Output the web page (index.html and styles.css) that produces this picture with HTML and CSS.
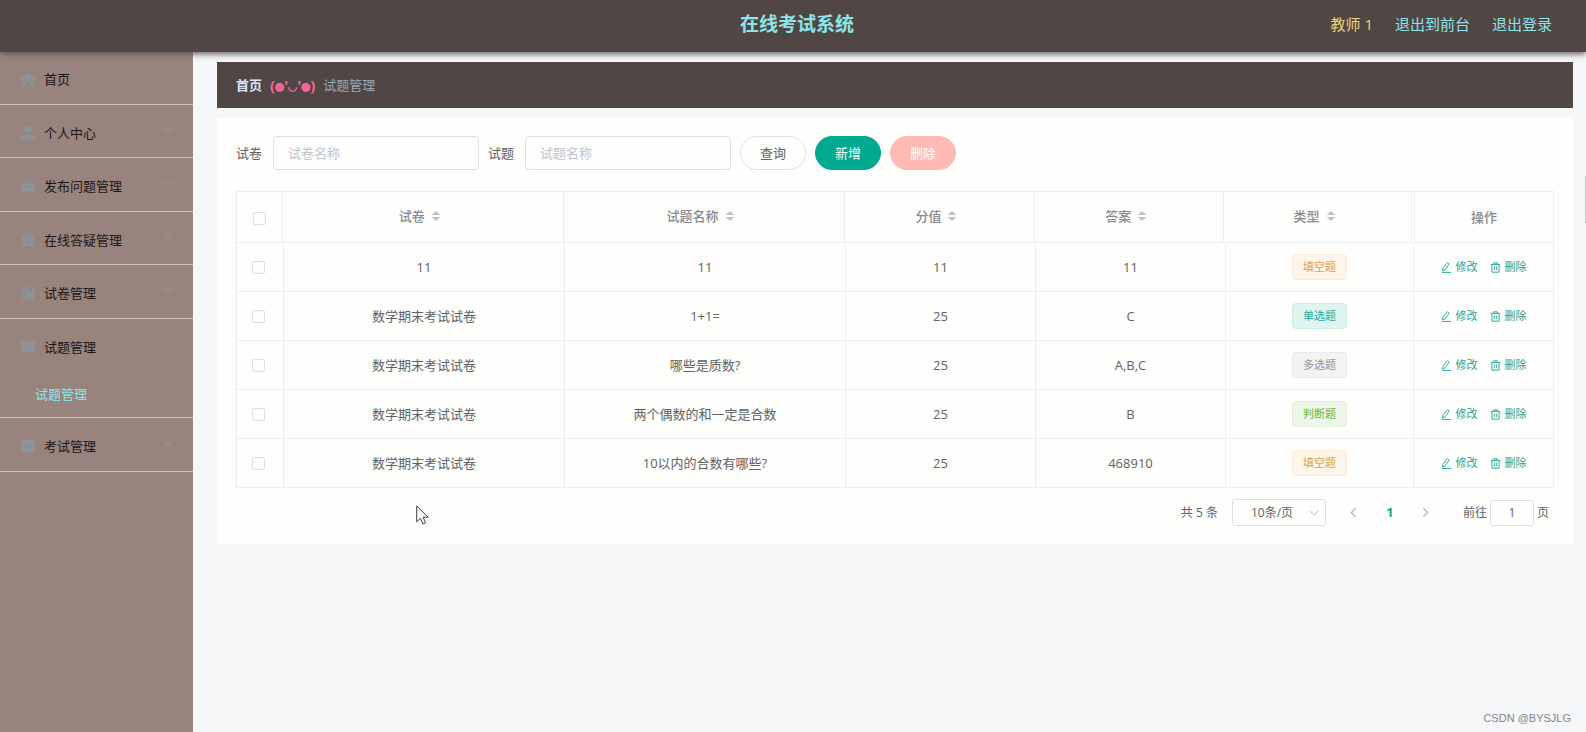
FILE: index.html
```html
<!DOCTYPE html>
<html lang="zh-CN">
<head>
<meta charset="utf-8">
<meta name="viewport" content="width=device-width, initial-scale=1">
<title>在线考试系统</title>
<link rel="stylesheet" href="styles.css">
</head>
<body>
<svg class="sprite" aria-hidden="true">
  <symbol id="down" viewBox="0 0 10 10"><path d="M1 3l4 4 4-4" fill="none" stroke="currentColor"/></symbol>
  <symbol id="up" viewBox="0 0 10 10"><path d="M1 7l4-4 4 4" fill="none" stroke="currentColor"/></symbol>
  <symbol id="edit" viewBox="0 0 12 12"><path d="M1.600 9.800l.5-2.800L6.200 1.400Q7 .5 8 1.200T8.500 3L4.400 8.500zM1 11.400h10" fill="none" stroke="currentColor"/></symbol>
  <symbol id="trash" viewBox="0 0 12 12"><path d="M.8 2.600h10.400M4.100 2.400V.9h3.800v1.500M2.100 2.800v8.300h7.800V2.800M4.700 4.900v4M7.300 4.900v4" fill="none" stroke="currentColor"/></symbol>
  <symbol id="sort" viewBox="0 0 10 12"><path d="M5 1l4.500 4h-9zM5 11l4.500-4h-9z" fill="currentColor"/></symbol>
</svg>

<header class="topbar">
  <h1 class="topbar-title">在线考试系统</h1>
  <nav class="topbar-nav">
    <span class="user">教师 1</span>
    <a href="#front">退出到前台</a>
    <a href="#logout">退出登录</a>
  </nav>
</header>

<div class="layout">
  <aside class="sidebar">
    <ul class="menu">
      <li><a class="menu-item home" href="#home">
        <svg class="menu-icon" viewBox="0 0 14 14"><path d="M7 .5L.3 6.200v1.500h1.200v5.500h3.900V9.200h3.200v4h3.900V7.700h1.200V6.200z"/></svg>
        <span>首页</span></a></li>
      <li><a class="menu-item" href="#me">
        <svg class="menu-icon" viewBox="0 0 14 14"><circle cx="7" cy="3.600" r="3.500"/><path d="M.3 13.500v-2.200q0-2.800 2.800-2.800h7.800q2.800 0 2.800 2.800v2.200z"/></svg>
        <span>个人中心</span><svg class="menu-arrow"><use href="#down"/></svg></a></li>
      <li><a class="menu-item" href="#publish">
        <svg class="menu-icon" viewBox="0 0 14 14"><path d="M.3 3.400h3.200V1h7v2.400h3.200v4H.3zM4.500 2v1.400h5V2zM.3 8.300h13.400v4.900H.3z" fill-rule="evenodd"/></svg>
        <span>发布问题管理</span><svg class="menu-arrow"><use href="#down"/></svg></a></li>
      <li><a class="menu-item" href="#answers">
        <svg class="menu-icon" viewBox="0 0 14 14"><path d="M1 1.800h3V.4h6v1.400h3v11.800H1z"/><path class="icon-cut" d="M4.300 3h5.400M4.600 6.200l4.800 4.800M9.400 6.200L4.600 11"/></svg>
        <span>在线答疑管理</span><svg class="menu-arrow"><use href="#down"/></svg></a></li>
      <li><a class="menu-item" href="#papers">
        <svg class="menu-icon" viewBox="0 0 14 14"><path d="M.8.600h1.800v12.800H.8zM3.700.600h4.200v4.200l1.600-1.300 1.600 1.300V.600h2.100v12.800H3.700z"/></svg>
        <span>试卷管理</span><svg class="menu-arrow"><use href="#down"/></svg></a></li>
      <li><a class="menu-item open" href="#questions">
        <svg class="menu-icon" viewBox="0 0 14 14"><path d="M0 1.600h9.200v1.200h1V1.600H14v3.200Q12.200 5.200 12.200 7T14 9.200v3.200h-3.800v-1.200h-1v1.200H0V9.200Q1.800 8.800 1.800 7T0 4.800z"/></svg>
        <span>试题管理</span><svg class="menu-arrow"><use href="#up"/></svg></a>
        <a class="submenu-item" href="#question-list">试题管理</a></li>
      <li><a class="menu-item" href="#exams">
        <svg class="menu-icon" viewBox="0 0 14 14"><path d="M.5.8h13v12.600H.5z"/><path class="icon-cut" d="M3 9.600l2.500-2.800 2.200 1.800L11.300 5"/></svg>
        <span>考试管理</span><svg class="menu-arrow"><use href="#down"/></svg></a></li>
    </ul>
  </aside>

  <main class="content">
    <nav class="breadcrumb">
      <a href="#home">首页</a><span class="face">(●'◡'●)</span><span>试题管理</span>
    </nav>

    <section class="card">
      <form class="filters">
        <label for="paper">试卷</label>
        <input class="field" id="paper" type="text" placeholder="试卷名称">
        <label for="question">试题</label>
        <input class="field" id="question" type="text" placeholder="试题名称">
        <button class="btn" type="button">查询</button>
        <button class="btn btn-add" type="button">新增</button>
        <button class="btn btn-delete" type="button" disabled>删除</button>
      </form>

      <table class="grid">
        <thead>
          <tr>
            <th><input type="checkbox" aria-label="全选"></th>
            <th>试卷<svg class="sort"><use href="#sort"/></svg></th>
            <th>试题名称<svg class="sort"><use href="#sort"/></svg></th>
            <th>分值<svg class="sort"><use href="#sort"/></svg></th>
            <th>答案<svg class="sort"><use href="#sort"/></svg></th>
            <th>类型<svg class="sort"><use href="#sort"/></svg></th>
            <th class="actions-head">操作</th>
          </tr>
        </thead>
        <tbody>
          <tr>
            <td><input type="checkbox" aria-label="选择第1行"></td><td>11</td><td>11</td><td>11</td><td>11</td>
            <td><span class="tag tag-fill">填空题</span></td>
            <td><button class="action" type="button"><svg><use href="#edit"/></svg>修改</button><button class="action" type="button"><svg><use href="#trash"/></svg>删除</button></td>
          </tr>
          <tr>
            <td><input type="checkbox" aria-label="选择第2行"></td><td>数学期末考试试卷</td><td>1+1=</td><td>25</td><td>C</td>
            <td><span class="tag tag-single">单选题</span></td>
            <td><button class="action" type="button"><svg><use href="#edit"/></svg>修改</button><button class="action" type="button"><svg><use href="#trash"/></svg>删除</button></td>
          </tr>
          <tr>
            <td><input type="checkbox" aria-label="选择第3行"></td><td>数学期末考试试卷</td><td>哪些是质数?</td><td>25</td><td>A,B,C</td>
            <td><span class="tag tag-multi">多选题</span></td>
            <td><button class="action" type="button"><svg><use href="#edit"/></svg>修改</button><button class="action" type="button"><svg><use href="#trash"/></svg>删除</button></td>
          </tr>
          <tr>
            <td><input type="checkbox" aria-label="选择第4行"></td><td>数学期末考试试卷</td><td>两个偶数的和一定是合数</td><td>25</td><td>B</td>
            <td><span class="tag tag-judge">判断题</span></td>
            <td><button class="action" type="button"><svg><use href="#edit"/></svg>修改</button><button class="action" type="button"><svg><use href="#trash"/></svg>删除</button></td>
          </tr>
          <tr>
            <td><input type="checkbox" aria-label="选择第5行"></td><td>数学期末考试试卷</td><td>10以内的合数有哪些?</td><td>25</td><td>468910</td>
            <td><span class="tag tag-fill">填空题</span></td>
            <td><button class="action" type="button"><svg><use href="#edit"/></svg>修改</button><button class="action" type="button"><svg><use href="#trash"/></svg>删除</button></td>
          </tr>
        </tbody>
      </table>

      <div class="pager">
        <span>共 5 条</span>
        <span class="page-size">
          <select aria-label="每页条数"><option>10条/页</option><option>20条/页</option></select>
          <svg><use href="#down"/></svg>
        </span>
        <div class="pages">
          <button type="button" aria-label="上一页"><svg viewBox="0 0 10 10"><path d="M7 1L3 5l4 4"/></svg></button>
          <button class="current" type="button">1</button>
          <button type="button" aria-label="下一页"><svg viewBox="0 0 10 10"><path d="M3 1l4 4-4 4"/></svg></button>
        </div>
        <div class="jump"><label for="jump">前往</label><input id="jump" type="text" value="1"><span>页</span></div>
      </div>
    </section>
  </main>
</div>

<svg class="cursor" viewBox="0 0 13 20" aria-hidden="true"><path d="M.7 1v15.800l3.700-3.500 2.500 5.700 2.700-1.200-2.500-5.600h5.100z"/></svg>
<div class="scroll-thumb"></div>
<footer class="watermark">CSDN @BYSJLG</footer>
</body>
</html>
```

FILE: styles.css
```css
* { box-sizing: border-box; }

body {
  margin: 0;
  min-height: 100vh;
  display: flex;
  flex-direction: column;
  background: #f5f7f9;
  color: #606266;
  font: 13px/20px "Open Sans", "Noto Sans CJK SC", sans-serif;
}

a { color: inherit; text-decoration: none; }
button, input, select { font: inherit; color: inherit; }
.sprite { position: absolute; width: 0; height: 0; }

/* Top bar */
.topbar {
  position: relative;
  z-index: 1;
  display: grid;
  grid-template-columns: 1fr auto 1fr;
  align-items: center;
  height: 52px;
  padding: 0 34px 4px 42px;
  background: #504744;
  box-shadow: 0 2px 6px #605b59;
}
.topbar-title {
  grid-column: 2;
  margin: 0;
  color: #8de5ea;
  font-size: 19px;
  line-height: 28px;
}
.topbar-nav {
  display: flex;
  justify-content: flex-end;
  gap: 22px;
  color: #8de5ea;
  font-size: 15px;
}
.user { color: #f2d27c; }

/* Sidebar */
.layout { flex: 1; display: flex; }
.sidebar {
  flex: none;
  width: 195px;
  background: #98837d;
  border-right: 2px solid #fcfcfc;
}
.menu { list-style: none; margin: 0; padding: 0; }
.menu li { border-bottom: 1px solid #cfc3bf; }
.menu-item {
  display: flex;
  align-items: center;
  gap: 9px;
  height: 52px;
  padding: 3px 20px 0 21px;
  color: #1c1716;
}
.menu li + li .menu-item { height: 53px; }
.menu li:nth-child(even) .menu-item { height: 52px; }
.menu-item.home { padding-top: 1px; }
.menu-icon { flex: none; width: 14px; height: 14px; fill: #8b9298; }
.icon-cut { fill: none; stroke: #98837d; }
.menu-arrow {
  width: 10px;
  height: 10px;
  margin: 0 0 6px auto;
  color: #909e9e;
}
.submenu-item {
  display: block;
  padding: 13px 35px;
  color: #8de5ea;
}

/* Content */
.content { flex: 1; min-width: 0; padding: 10px 13px 0 22px; }
.breadcrumb {
  display: flex;
  align-items: center;
  gap: 8px;
  height: 46px;
  margin-bottom: 9px;
  padding: 0 19px;
  background: #504744;
  color: #97a8be;
  outline: 1px solid #fdfdfd;
}
.breadcrumb a { color: #dce6fb; font-weight: 700; }
.face { color: #f564a0; font: 700 15px/20px "Open Sans", "DejaVu Sans Mono", sans-serif; }
.card { padding: 19px 19px 18px; background: #fefefd; }

.filters { display: flex; align-items: center; gap: 9px; margin-bottom: 21px; }
.field {
  width: 206px;
  height: 34px;
  margin-left: 2px;
  padding: 0 14px;
  border: 1px solid #dcdfe6;
  border-radius: 4px;
  background: transparent;
}
.field::placeholder { color: #c0c4cc; }
.btn {
  width: 66px;
  height: 34px;
  padding: 0;
  border: 1px solid #dcdfe6;
  border-radius: 17px;
  background: transparent;
}
.btn-add { border-color: #00aa90; background: #00aa90; color: #fff; }
.btn-delete { border-color: #ffbab3; background: #ffbab3; color: #fff; }

/* Question table: the header reserves a narrow gutter before the last column */
.grid { display: block; border: solid #ebeef5; border-width: 1px 0 0 1px; }
.grid thead, .grid tbody { display: block; }
.grid tr { display: grid; grid-template-columns: 47px 281fr 281fr 190fr 190fr 188fr 140px; }
.grid thead tr { grid-template-columns: 46px 281fr 281fr 191fr 189fr 188fr 142px; }
.grid th, .grid td {
  display: flex;
  align-items: center;
  justify-content: center;
  min-width: 0;
  padding: 0;
  border: solid #ebeef5;
  border-width: 0 1px 1px 0;
}
.grid th { height: 51px; padding: 0 6px 2px 0; color: #868a91; font-weight: 500; }
.grid td { height: 49px; }
.grid th:first-child { padding: 3px 0 0; }
.grid .actions-head { margin-left: 2px; padding: 0; border-left-width: 1px; }
.sort { width: 10px; height: 12px; margin-left: 6px; color: #bfc2c9; }

.grid input {
  appearance: none;
  width: 13px;
  height: 13px;
  margin: 0 4px 0 0;
  border: 1px solid #dcdfe6;
  border-radius: 2px;
}
.grid th input { margin: 0; }

.tag {
  padding: 0 10px;
  border: 1px solid;
  border-radius: 4px;
  font-size: 11px;
  line-height: 24px;
}
.tag-fill { border-color: #faecd8; background: #fdf5ea; color: #e0a044; }
.tag-single { border-color: #ccede7; background: #e2f4f1; color: #1bac96; }
.tag-multi { border-color: #e9e9eb; background: #f3f3f4; color: #909399; }
.tag-judge { border-color: #dfefd6; background: #edf6e8; color: #67b440; }

.action {
  display: flex;
  align-items: center;
  gap: 4px;
  margin: 0 6px;
  padding: 0;
  border: 0;
  background: none;
  color: #1ca591;
  font-size: 11px;
}
.action svg { width: 11px; height: 11px; }

/* Pagination */
.pager {
  display: flex;
  align-items: center;
  justify-content: flex-end;
  margin-top: 11px;
  padding-right: 5px;
  font-size: 12px;
}
.page-size { position: relative; margin-left: 14px; }
.page-size select {
  display: block;
  appearance: none;
  width: 94px;
  height: 27px;
  padding: 0 26px 0 12px;
  border: 1px solid #dcdfe6;
  border-radius: 3px;
  background: transparent;
  text-align-last: center;
}
.page-size svg {
  position: absolute;
  top: 9px;
  right: 7px;
  width: 10px;
  height: 10px;
  color: #b8bcc5;
  pointer-events: none;
}
.pages { display: flex; margin: 0 19px 0 10px; }
.pages button {
  display: flex;
  align-items: center;
  justify-content: center;
  width: 36px;
  height: 27px;
  padding: 0;
  border: 0;
  background: none;
}
.pages svg { width: 11px; height: 11px; fill: none; stroke: #a8abb2; }
.pages .current { color: #00a68c; font-weight: 700; }
.jump { display: flex; align-items: center; gap: 3px; }
.jump input {
  width: 44px;
  height: 26px;
  padding: 0;
  border: 1px solid #dcdfe6;
  border-radius: 3px;
  background: transparent;
  text-align: center;
}

/* Overlays */
.cursor {
  position: absolute;
  left: 416px;
  top: 505px;
  width: 13px;
  height: 20px;
  fill: #fff;
  stroke: #3c3c46;
}
.scroll-thumb {
  position: absolute;
  right: 0;
  top: 176px;
  width: 1px;
  height: 47px;
  background: #c3c6cb;
}
.watermark {
  position: absolute;
  right: 15px;
  bottom: 4px;
  color: #858688;
  font: 11px/20px "Liberation Sans", sans-serif;
}
```
